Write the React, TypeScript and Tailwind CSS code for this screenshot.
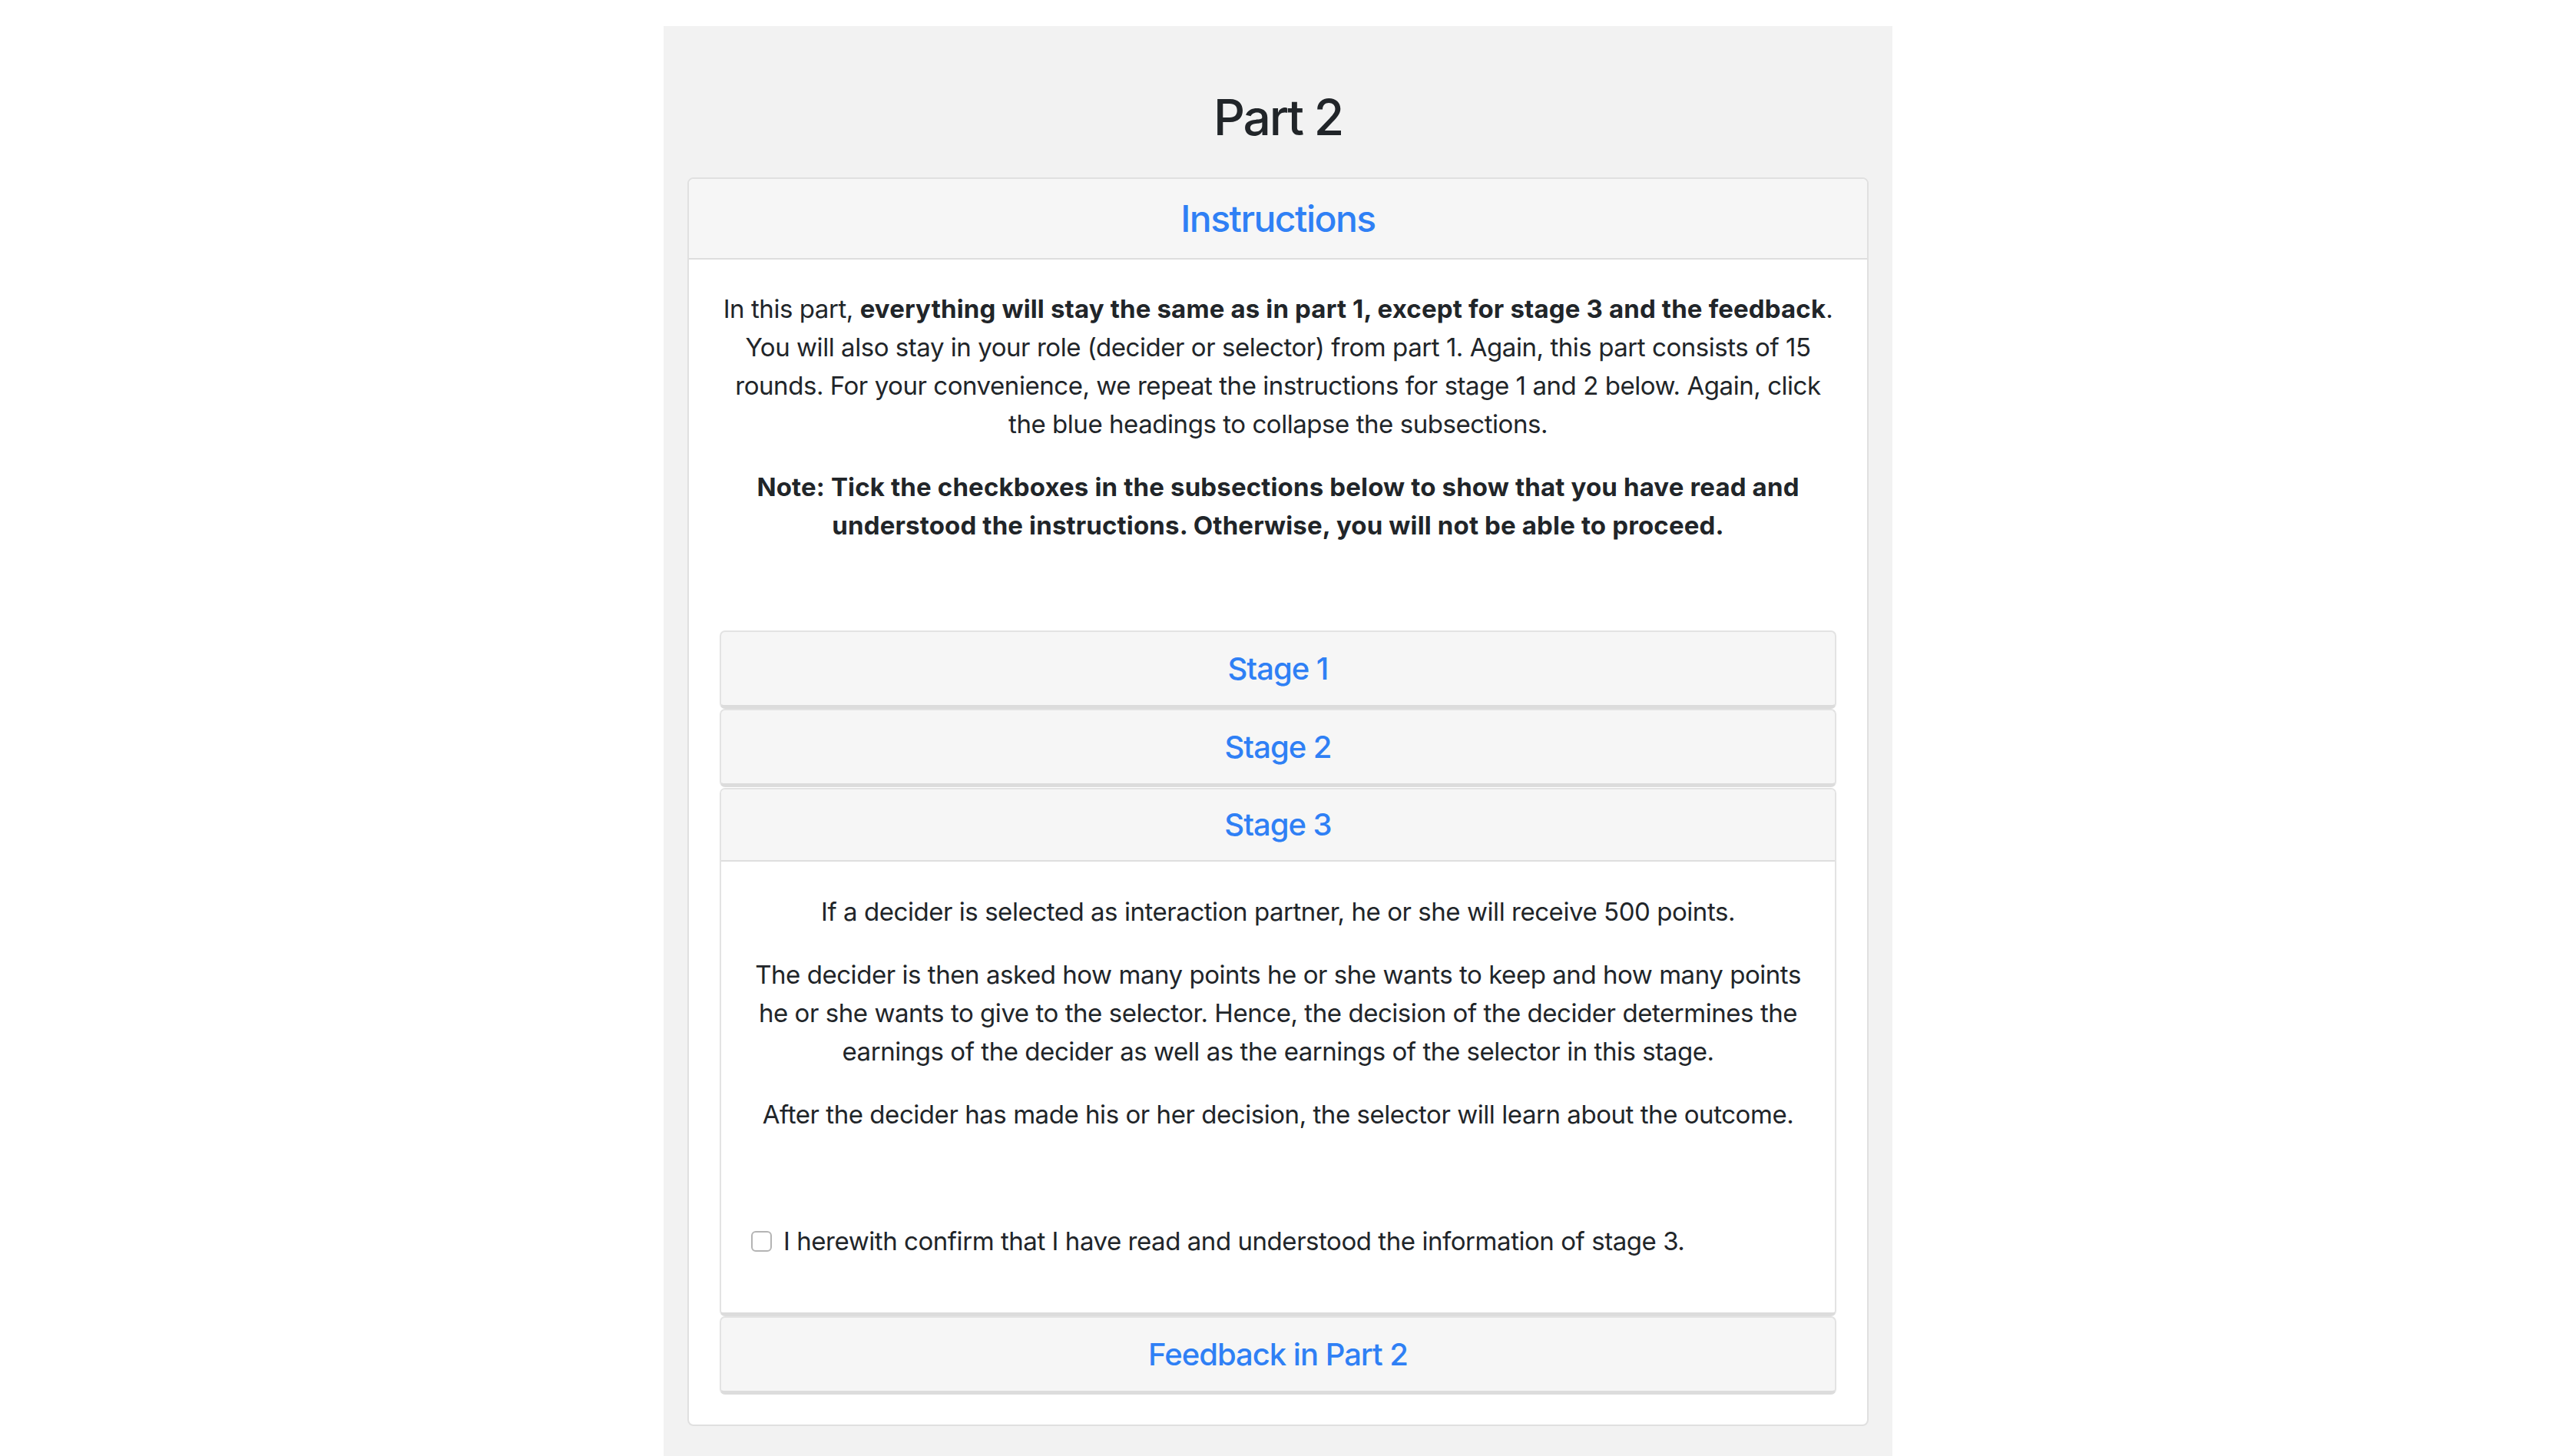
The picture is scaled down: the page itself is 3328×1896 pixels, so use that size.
const blue = "text-[#2f80f5]";

function StageHeader({ title }: { title: string }) {
  return (
    <div className="flex h-[102px] items-center justify-center rounded-[7px] border-2 border-b-[5px] border-[#e3e3e3] border-b-[#dcdcdc] bg-[#f6f6f6]">
      <h5 className={`text-[40px] leading-[48px] font-medium tracking-[-1px] ${blue}`}>{title}</h5>
    </div>
  );
}

export default function App() {
  return (
    <div className="flex min-h-screen justify-center bg-white pt-[34px] font-['Inter',sans-serif] text-[#212529]">
      <div className="w-[1600px] bg-[#f2f2f2] px-[31px] pt-[80px] pb-[35px]">
        <h2 className="mb-[40px] text-center text-[64px] leading-[77px] font-medium tracking-[-2.2px]">Part 2</h2>

        <div className="overflow-hidden rounded-[8px] border-2 border-[#e0e0e0] bg-white">
          <div className="flex h-[105px] items-center justify-center border-b-2 border-[#dedede] bg-[#f6f6f6]">
            <h4 className={`text-[48px] leading-[58px] font-medium tracking-[-1.5px] ${blue}`}>Instructions</h4>
          </div>

          <div className="px-[40px] pt-[39px] pb-[39px] text-center text-[33px] leading-[50px] tracking-[-0.45px]">
            <p className="mb-[32px]">
              In this part,{" "}
              <b className="tracking-[0.15px]">
                everything will stay the same as in part 1, except for stage 3 and the feedback
              </b>
              . You will also stay in your role (decider or selector) from part 1. Again, this part consists of 15
              rounds. For your convenience, we repeat the instructions for stage 1 and 2 below. Again, click the
              blue headings to collapse the subsections.
            </p>
            <p className="mb-[112px] font-bold tracking-[0.15px]">
              Note: Tick the checkboxes in the subsections below to show that you have read and understood the
              instructions. Otherwise, you will not be able to proceed.
            </p>

            <div className="flex flex-col">
              <StageHeader title="Stage 1" />
              <StageHeader title="Stage 2" />

              <div className="mt-px overflow-hidden rounded-[7px] border-2 border-b-[5px] border-[#e3e3e3] border-b-[#dcdcdc]">
                <div className="flex h-[94px] items-center justify-center border-b-2 border-[#dedede] bg-[#f6f6f6]">
                  <h5 className={`text-[40px] leading-[48px] font-medium tracking-[-1px] ${blue}`}>Stage 3</h5>
                </div>
                <div className="bg-white px-[39px] pt-[40px] pb-[68px]">
                  <p className="mb-[32px]">
                    If a decider is selected as interaction partner, he or she will receive 500 points.
                  </p>
                  <p className="mb-[32px]">
                    The decider is then asked how many points he or she wants to keep and how many points he or
                    she wants to give to the selector. Hence, the decision of the decider determines the earnings
                    of the decider as well as the earnings of the selector in this stage.
                  </p>
                  <p className="mb-[115px]">
                    After the decider has made his or her decision, the selector will learn about the outcome.
                  </p>
                  <label className="flex items-center gap-[15px] text-left">
                    <input
                      type="checkbox"
                      className="h-[27px] w-[27px] shrink-0 appearance-none rounded-[6px] border-2 border-[#b4b4b4] bg-white"
                    />
                    <span>I herewith confirm that I have read and understood the information of stage 3.</span>
                  </label>
                </div>
              </div>

              <StageHeader title="Feedback in Part 2" />
            </div>
          </div>
        </div>
      </div>
    </div>
  );
}
